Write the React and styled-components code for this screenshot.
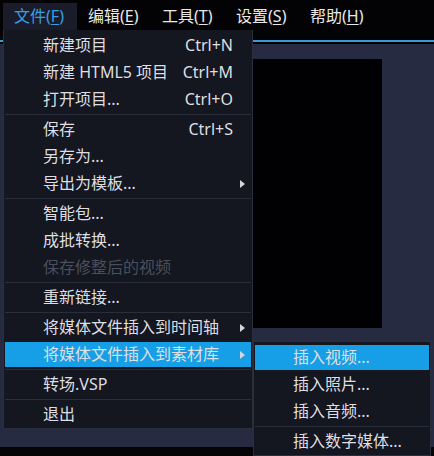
import React from "react";
import styled, { createGlobalStyle } from "styled-components";

const GlobalStyle = createGlobalStyle`
  html, body {
    margin: 0;
    padding: 0;
    background: #030305;
    overflow: hidden;
  }
  body {
    font-family: "Noto Sans", "Noto Sans CJK SC", sans-serif;
  }
`;

const menuTitles = [
  { label: "文件", key: "F", active: true },
  { label: "编辑", key: "E" },
  { label: "工具", key: "T" },
  { label: "设置", key: "S" },
  { label: "帮助", key: "H" },
];

// groups of the file menu, a separator goes between groups
const fileMenu = [
  [
    { label: "新建项目", shortcut: "Ctrl+N" },
    { label: "新建 HTML5 项目", shortcut: "Ctrl+M" },
    { label: "打开项目...", shortcut: "Ctrl+O" },
  ],
  [
    { label: "保存", shortcut: "Ctrl+S" },
    { label: "另存为..." },
    { label: "导出为模板...", sub: true },
  ],
  [
    { label: "智能包..." },
    { label: "成批转换..." },
    { label: "保存修整后的视频", disabled: true },
  ],
  [{ label: "重新链接..." }],
  [
    { label: "将媒体文件插入到时间轴", sub: true },
    { label: "将媒体文件插入到素材库", sub: true, hover: true },
  ],
  [{ label: "转场.VSP" }],
  [{ label: "退出" }],
];

const libraryMenu = [
  [
    { label: "插入视频...", hover: true },
    { label: "插入照片..." },
    { label: "插入音频..." },
  ],
  [{ label: "插入数字媒体..." }],
];

function MenuList({ groups }) {
  return groups.map((group, gi) => (
    <React.Fragment key={gi}>
      {gi > 0 && <Separator />}
      {group.map((item) => (
        <Item key={item.label} hover={item.hover} disabled={item.disabled}>
          <span>{item.label}</span>
          {item.shortcut && <Shortcut>{item.shortcut}</Shortcut>}
          {item.sub && (
            <Arrow viewBox="0 0 5 8">
              <path d="M0 0 L5 4 L0 8 Z" fill="currentColor" />
            </Arrow>
          )}
        </Item>
      ))}
    </React.Fragment>
  ));
}

export default function App() {
  return (
    <>
      <GlobalStyle />
      <Window>
        <MenuBar>
          {menuTitles.map((m) => (
            <MenuTitle key={m.key} active={m.active}>
              {m.label}(<u>{m.key}</u>)
            </MenuTitle>
          ))}
        </MenuBar>
        <AccentLine />
        <Workspace>
          <Preview />
        </Workspace>
        <BottomBar />

        <Dropdown>
          <MenuList groups={fileMenu} />
        </Dropdown>
        <SubMenu>
          <MenuList groups={libraryMenu} />
        </SubMenu>
      </Window>
    </>
  );
}

const Window = styled.div`
  position: relative;
  width: 434px;
  height: 456px;
  display: flex;
  flex-direction: column;
  background: #030305;
  overflow: hidden;
`;

const MenuBar = styled.div`
  height: 40px;
  display: flex;
  align-items: flex-start;
  padding-left: 3px;
  background: #030305;
`;

const MenuTitle = styled.div`
  width: 74px;
  box-sizing: border-box;
  margin-top: 3px;
  height: 27px;
  line-height: 27px;
  padding-left: 11px;
  font-size: 16px;
  color: ${(p) => (p.active ? "#3a9de4" : "#e8e8ea")};
  background: ${(p) => (p.active ? "#1a1d29" : "transparent")};

  u {
    text-underline-offset: 2px;
  }
`;

const AccentLine = styled.div`
  height: 2px;
  margin-bottom: 2px;
  background: #3a9ad9;
`;

const Workspace = styled.div`
  flex: 1;
  display: grid;
  grid-template-columns: 253px 129px 1fr;
  grid-template-rows: 15px 269px 1fr;
  background: #262b41;
`;

const Preview = styled.div`
  grid-column: 2;
  grid-row: 2;
  background: #010103;
`;

const BottomBar = styled.div`
  height: 9px;
  background: #050508;
`;

const Dropdown = styled.div`
  position: absolute;
  left: 3px;
  top: 30px;
  width: 250px;
  box-sizing: border-box;
  padding: 2px 1px 0;
  display: flex;
  flex-direction: column;
  background: #141620;
  border: 1px solid #2b2e3c;
  border-top: none;
`;

const SubMenu = styled(Dropdown)`
  left: 253px;
  top: 341px;
  width: 178px;
  border-top: 1px solid #2b2e3c;
  padding-bottom: 0;
`;

const Item = styled.div`
  position: relative;
  height: 25px;
  margin: 1px 0;
  display: flex;
  align-items: center;
  padding: 0 18px 0 38px;
  font-size: 16px;
  line-height: 25px;
  white-space: nowrap;
  color: ${(p) => (p.disabled ? "#4a4e5d" : "#dedfe3")};
  background: ${(p) => (p.hover ? "#169fe6" : "transparent")};
`;

const Shortcut = styled.span`
  margin-left: auto;
`;

const Arrow = styled.svg`
  position: absolute;
  right: 6px;
  top: 9px;
  width: 5px;
  height: 8px;
  color: #d4d6dc;
`;

const Separator = styled.div`
  height: 1px;
  margin: 1px 0;
  background: #2a2d3b;
`;
